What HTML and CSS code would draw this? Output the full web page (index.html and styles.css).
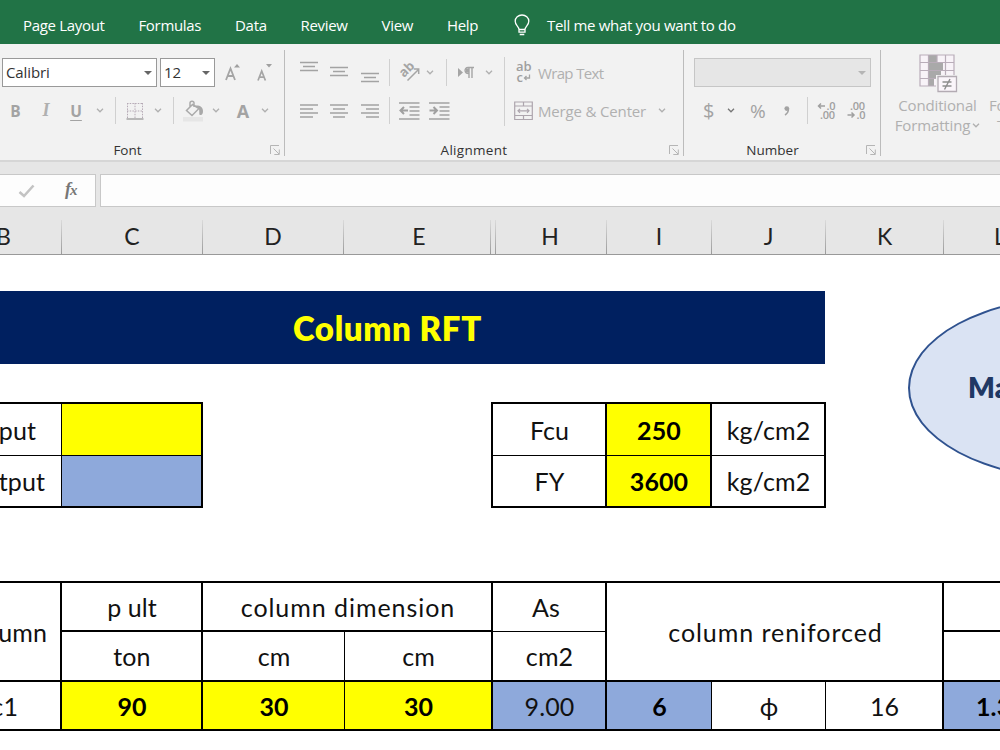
FILE: index.html
```
<!DOCTYPE html>
<html lang="en">
<head>
<meta charset="utf-8">
<title>Column RFT</title>
<link rel="stylesheet" href="styles.css">
</head>
<body>
<svg class="defs" width="0" height="0">
  <symbol id="chev" viewBox="0 0 8 5"><path d="M1 .8 4 3.8 7 .8" fill="none" stroke="currentColor" stroke-width="1.3"/></symbol>
  <symbol id="tri" viewBox="0 0 8 4"><path d="M0 0h8L4 4z" fill="currentColor"/></symbol>
  <symbol id="launch" viewBox="0 0 10 10"><path d="M.5 9V.5H9M3.5 3.5 9 9M9.3 4.5v5h-5" fill="none" stroke="#b5b5b5"/></symbol>
</svg>

<nav class="tabs">
  <span>Page Layout</span><span>Formulas</span><span>Data</span><span>Review</span><span>View</span><span>Help</span>
  <span class="tell">
    <svg class="bulb" width="16" height="22" viewBox="0 0 16 22"><path d="M5 15.5c0-3-3.8-4-3.8-8.2a6.8 6.3 0 0 1 13.6 0c0 4.200-3.800 5.200-3.800 8.200zM5 15.500v2.700h6v-2.700M5.700 20.500h4.600" fill="none" stroke="#fff" stroke-width="1.300"/></svg>
    <span class="ask">Tell me what you want to do</span>
  </span>
</nav>

<section class="ribbon">
  <div class="group font">
    <div class="row1 fontrow1">
      <div class="combo"><span>Calibri</span><svg width="8" height="4"><use href="#tri"/></svg></div>
      <div class="combo"><span>12</span><svg width="8" height="4"><use href="#tri"/></svg></div>
      <svg class="grow" width="18" height="20" viewBox="0 0 18 20"><path d="M2 17 6.500 5.500 11 17M3.600 13h6" fill="none" stroke="#a5a5a5" stroke-width="1.800"/><path d="M10 4.500h6L13 1z" fill="#a0a0a0"/></svg>
      <svg class="shrink" width="18" height="20" viewBox="0 0 18 20"><path d="M2 17.500 5.700 8 9.400 17.500M3.400 14.200h4.800" fill="none" stroke="#a5a5a5" stroke-width="1.700"/><path d="M10 1h6l-3 3.500z" fill="#a0a0a0"/></svg>
    </div>
    <div class="row2 fontrow2">
      <b>B</b><i>I</i><u>U</u>
      <svg width="8" height="5"><use href="#chev"/></svg>
      <span class="sep"></span>
      <svg width="18" height="18" viewBox="0 0 18 18"><path d="M1 1.500h16M1 9h16M1.500 1v15M9 1v15M16.500 1v15" fill="none" stroke="#b5a9b5" stroke-dasharray="1.500 1.200"/><path d="M.5 17h17" stroke="#a5a5a5" stroke-width="1.500"/></svg>
      <svg width="8" height="5"><use href="#chev"/></svg>
      <span class="sep"></span>
      <svg class="bucket" width="22" height="22" viewBox="0 0 22 22"><path d="M0 17h20v4.500H0z" fill="#e6e6e6"/><path d="M9.500 4.500 3.500 10.500l5.500 5 7-7zM7 6.500V3c0-2.500 4-2.500 4 0v4" fill="none" stroke="#aaa" stroke-width="1.500"/><path d="M12 5.500c5-.5 8 1.500 8 5.500 0 2-.5 4-2.500 4-1.800 0-.8-2-1.500-6z" fill="#a9a9a9"/></svg>
      <svg width="8" height="5"><use href="#chev"/></svg>
      <b class="fontcolor">A</b>
      <svg width="8" height="5"><use href="#chev"/></svg>
    </div>
    <div class="caption"><span>Font</span></div>
    <svg class="launcher" width="10" height="10"><use href="#launch"/></svg>
  </div>

  <div class="group align">
    <div class="row1 alignrow1">
      <svg width="18" height="22" viewBox="0 0 18 22"><path d="M0 .5h18M3 4.500h12M0 8.500h18" stroke="#a3a3a3" stroke-width="1.300"/></svg>
      <svg width="18" height="22" viewBox="0 0 18 22"><path d="M0 5.500h18M3 9.500h12M0 13.500h18" stroke="#a3a3a3" stroke-width="1.300"/></svg>
      <svg width="18" height="22" viewBox="0 0 18 22"><path d="M0 11.500h18M3 15.500h12M0 19.500h18" stroke="#a3a3a3" stroke-width="1.300"/></svg>
      <span class="sep"></span>
      <svg class="orient" width="22" height="22" viewBox="0 0 22 22"><text class="ab" transform="translate(5 16) rotate(-45)">ab</text><path d="M8.500 18.500 19 8M14.800 7h4.900v4.900" fill="none" stroke="#a5a5a5" stroke-width="1.500"/></svg>
      <svg class="c1v" width="8" height="5"><use href="#chev"/></svg>
      <span class="sep"></span>
      <svg class="rtl" width="18" height="14" viewBox="0 0 18 14"><path d="M1 2v9l5-4.500z" fill="#a5a5a5"/><path d="M11.500 7.500C7 7.500 7 1.500 11 1.500h6M12 1.500V12M15 1.500V12" fill="none" stroke="#a5a5a5" stroke-width="1.400"/><path d="M9 2.500h3v4H9z" fill="#a5a5a5"/></svg>
      <svg class="c2v" width="8" height="5"><use href="#chev"/></svg>
    </div>
    <div class="wrap">
      <svg width="16" height="22" viewBox="0 0 16 22"><text class="abc" x="0" y="9">ab</text><text class="abc" x="0.500" y="19.500">c</text><path d="M13.500 12.500v3.500H8.500M10.500 14 8.500 16l2 2" fill="none" stroke="#a5a5a5" stroke-width="1.300"/></svg>
      <span>Wrap Text</span>
    </div>
    <div class="row2 alignrow2">
      <svg width="18" height="14" viewBox="0 0 18 14"><path d="M0 1h18M0 5h13M0 9h18M0 13h13" stroke="#a3a3a3" stroke-width="1.300"/></svg>
      <svg width="18" height="14" viewBox="0 0 18 14"><path d="M0 1h18M3 5h12M0 9h18M3 13h12" stroke="#a3a3a3" stroke-width="1.300"/></svg>
      <svg width="18" height="14" viewBox="0 0 18 14"><path d="M0 1h18M5 5h13M0 9h18M5 13h13" stroke="#a3a3a3" stroke-width="1.300"/></svg>
      <span class="sep"></span>
      <svg width="21" height="18" viewBox="0 0 21 18"><path d="M0 1h20.500M10.500 5h10M10.500 9h10M10.500 13h10M0 17h20.500" stroke="#a3a3a3" stroke-width="1.300"/><path d="M9 8.500H1.500M5 5 1.500 8.500 5 12" fill="none" stroke="#a0a0a0" stroke-width="2"/></svg>
      <svg width="21" height="18" viewBox="0 0 21 18"><path d="M0 1h20.500M10.500 5h10M10.500 9h10M10.500 13h10M0 17h20.500" stroke="#a3a3a3" stroke-width="1.300"/><path d="M.5 8.500H8M4.500 5 8 8.500 4.500 12" fill="none" stroke="#a0a0a0" stroke-width="2"/></svg>
    </div>
    <div class="merge">
      <svg width="19" height="20" viewBox="0 0 19 20"><path d="M.7 1h17.600v17.500H.7zM.7 5h17.600M.7 14.500h17.600M9.500 1v4M9.500 14.500v4M4 9.800h11M6 7.800l-2 2 2 2M13 7.800l2 2-2 2" fill="none" stroke="#ada5ad" stroke-width="1.200"/></svg>
      <span>Merge &amp; Center</span>
      <svg width="8" height="5"><use href="#chev"/></svg>
    </div>
    <div class="caption"><span>Alignment</span></div>
    <svg class="launcher" width="10" height="10"><use href="#launch"/></svg>
  </div>

  <div class="group number">
    <div class="row1"><div class="combo off"><svg width="8" height="4"><use href="#tri"/></svg></div></div>
    <div class="row2 numrow">
      <span class="sym">$</span>
      <svg class="dark" width="8" height="5"><use href="#chev"/></svg>
      <span class="sym pct">%</span>
      <svg width="6" height="10" viewBox="0 0 6 10"><circle cx="2.800" cy="2.600" r="2.400" fill="#a3a3a3"/><path d="M4.500 2.500C4.500 5.500 3.500 7.500 1 9" fill="none" stroke="#a3a3a3" stroke-width="1.500"/></svg>
      <span class="sep"></span>
      <svg width="20" height="20" viewBox="0 0 20 20"><text class="dec" x="9.500" y="9">.0</text><text class="dec" x="3" y="18">.00</text><path d="M8 5H1.500M4 2.500 1.500 5 4 7.500" fill="none" stroke="#a0a0a0" stroke-width="1.500"/></svg>
      <svg width="20" height="20" viewBox="0 0 20 20"><text class="dec" x="3" y="9">.00</text><text class="dec" x="9.500" y="18">.0</text><path d="M.5 14H7M4.500 11.500 7 14l-2.500 2.500" fill="none" stroke="#a0a0a0" stroke-width="1.500"/></svg>
    </div>
    <div class="caption"><span>Number</span></div>
    <svg class="launcher" width="10" height="10"><use href="#launch"/></svg>
  </div>

  <div class="styles">
    <div class="big cond">
      <svg width="39" height="39" viewBox="0 0 39 39"><path d="M1 1h34v31H1z" fill="#f8f3f8"/><path d="M10 1h8v7h-8zM10 9h14v7H10zM10 17h12v7H10zM10 25h5v7h-5z" fill="#a9a9a9"/><path d="M1 1h34v31H1zM1 8.500h34M1 16.500h34M1 24.500h34M9.500 1v31M18 1v7.500M26.500 1v31" fill="none" stroke="#b9adb9" stroke-width="1.200"/><path d="M17 21h22v18H17z" fill="#f2f2f2"/><path d="M19 22.500h18.500v15H19z" fill="#faf5fa" stroke="#b3abb3" stroke-width="1.300"/><path d="M23.500 28h9M23.500 32h9M31 25l-5.500 10.500" stroke="#8d8d8d" stroke-width="1.400"/></svg>
      <span>Conditional</span>
      <span class="line2">Formatting<svg width="8" height="5"><use href="#chev"/></svg></span>
    </div>
    <div class="big fmt"><span>Fo</span><span class="line2">T</span></div>
  </div>
</section>

<section class="formula">
  <div class="fx">
    <svg width="17" height="14" viewBox="0 0 17 14"><path d="M1.500 8 6 12 15.500 1.500" fill="none" stroke="#c3c3c3" stroke-width="2.600"/></svg>
    <span class="fn">f<small>x</small></span>
  </div>
  <div class="input"></div>
</section>

<section class="heads">
  <span class="hb">B</span><span>C</span><span>D</span><span class="he">E</span><span></span><span class="hh">H</span><span>I</span><span>J</span><span>K</span><span class="hl">L</span>
</section>

<main class="sheet">
  <div class="banner"><span>Column RFT</span></div>
  <div class="keys">
    <div class="legend">
      <div class="lab">Input</div><div class="yellow"></div>
      <div class="lab">Output</div><div class="blue"></div>
    </div>
    <div class="mats">
      <div>Fcu</div><div class="yellow bold">250</div><div>kg/cm2</div>
      <div>FY</div><div class="yellow bold">3600</div><div>kg/cm2</div>
    </div>
  </div>
  <div class="cols">
    <div class="first tall">column</div><div>p ult</div><div class="two wide">column dimension</div><div class="thinb as">As</div><div class="three tall wide">column reniforced</div><div class="edge"></div>
    <div>ton</div><div class="thinr">cm</div><div>cm</div><div class="cm2">cm2</div><div class="edge"></div>
    <div class="first c1">c1</div><div class="yellow bold">90</div><div class="yellow bold thinr">30</div><div class="yellow bold">30</div><div class="blue">9.00</div><div class="blue bold thinr">6</div><div class="thinr phi">ϕ</div><div>16</div><div class="blue bold ratio edge">1.3</div>
  </div>
  <div class="oval">Ma</div>
</main>
</body>
</html>
```
FILE: styles.css
```
* { box-sizing: border-box; }
body { margin: 0; width: 1000px; height: 750px; overflow: hidden; background: #fff; font-family: "Open Sans", "Noto Sans", sans-serif; display: flex; flex-direction: column; }
svg { display: block; flex: none; overflow: visible; }
.defs { position: absolute; }

.tabs { height: 44px; flex: none; background: #217346; color: #fff; display: flex; gap: 33.900px; padding: 5px 0 0 23px; align-items: center; font-size: 15px; letter-spacing: -.32px; white-space: nowrap; }
.tell { display: flex; align-items: center; gap: 17px; margin-left: 2px; }
.bulb { margin-top: 1px; }

.ribbon { height: 118px; flex: none; background: #f2f2f2; border-bottom: 2px solid #d6d6d6; display: flex; overflow: hidden; color: #b0b0b0; }
.group { position: relative; flex: none; display: grid; grid-template-rows: 13px 31px 7px 31px 13px 22px; }
.group::after { content: ""; position: absolute; right: 0; top: 6px; width: 1px; height: 106px; background: #bcbcbc; }
.font { width: 285px; }
.align { width: 399px; grid-template-columns: 219px 180px; }
.number { width: 197px; }
.row1 { grid-row: 2; display: grid; align-items: center; }
.row2 { grid-row: 4; display: grid; align-items: center; justify-items: center; }
.caption { grid-row: 6; grid-column: 1 / -1; text-align: center; color: #333; font-size: 13.500px; line-height: 23px; font-weight: 500; }
.font .caption { padding-right: 30px; }
.align .caption { padding-right: 21px; letter-spacing: .3px; }
.number .caption { padding-right: 20px; }
.launcher { position: absolute; right: 5px; bottom: 5px; }
.sep { width: 1px; height: 27px; background: #d0d0d0; }
.dark { color: #777; }

.fontrow1 { grid-template-columns: 155px 55px 18px 18px; padding-left: 2px; column-gap: 3px; }
.grow { margin-left: 6px; }
.shrink { margin-left: 17px; }
.combo { height: 29px; border: 1px solid #999; background: #fff; color: #333; display: flex; align-items: center; justify-content: space-between; padding: 0 4px 0 3px; font-size: 15px; letter-spacing: -.1px; line-height: 26px; }
.combo span { margin-top: -1px; }
.combo svg { color: #666; }
.combo.off { width: 177px; margin-left: 10px; background: #e6e6e6; border-color: #c6c6c6; justify-content: flex-end; }
.combo.off svg { color: #b5b5b5; }
.fontrow2 { grid-template-columns: 31px 30px 30px 18px 13px 25px 22px 9px 31px 14px 40px 4px; font-size: 15.500px; }
.fontrow2 b, .fontrow2 u { color: #a3a3a3; font-weight: 700; }
.fontrow2 i { font: italic 700 18px "Liberation Serif", serif; }
.fontrow2 u { text-underline-offset: 3px; text-decoration-thickness: 1px; }
.fontrow2 .fontcolor { font-size: 18px; font-weight: 700; }

.alignrow1, .alignrow2 { display: flex; align-items: center; padding-left: 15px; gap: 12.400px; }
.alignrow1 .sep, .alignrow2 .sep { margin-left: -2px; }
.alignrow1 .orient { margin-left: -4px; }
.alignrow1 .c1v { margin-left: -7.400px; }
.alignrow1 .c1v + .sep { margin-left: 0; }
.alignrow1 .rtl { margin-left: -2px; }
.alignrow1 .c2v { margin-left: -2.400px; }
.alignrow2 .sep + svg { margin-left: -3.400px; }
.alignrow2 svg:nth-child(6) { margin-left: -3.400px; }
.wrap, .merge { position: relative; display: flex; align-items: center; font-size: 15px; white-space: nowrap; line-height: 20px; }
.wrap { grid-row: 2; grid-column: 2; padding-left: 12px; gap: 6px; }
.wrap span { letter-spacing: -.65px; margin-top: 0; }
.merge { grid-row: 4; grid-column: 2; padding-left: 10px; gap: 5px; }
.merge span { letter-spacing: -.16px; margin-top: 1px; }
.merge span + svg { margin-left: 7px; }
.wrap::before { content: ""; position: absolute; left: 0; top: 0; width: 1px; height: 69px; background: #d0d0d0; }
.ab { font: 700 13px "Open Sans", sans-serif; fill: #a5a5a5; }
.abc { font: 600 13px "Open Sans", sans-serif; fill: #9f9f9f; }
.numrow { display: flex; padding-left: 19px; }
.numrow .dark { margin-left: 13px; }
.numrow .pct { margin-left: 15px; }
.numrow .pct + svg { margin-left: 17px; }
.numrow .sep { margin-left: 17px; }
.numrow .sep + svg { margin-left: 9px; }
.numrow svg:last-child { margin-left: 10px; }
.sym { font-size: 20px; width: 11px; color: #a3a3a3; }
.pct { width: 17px; font-size: 19px; }
.dec { font: 600 11px "Open Sans", sans-serif; fill: #a0a0a0; letter-spacing: -.3px; }

.styles { display: flex; flex: none; align-items: flex-start; width: 119px; overflow: hidden; }
.big { flex: none; display: flex; flex-direction: column; align-items: center; font-size: 15px; line-height: 20px; white-space: nowrap; letter-spacing: -.15px; }
.cond { width: 108px; padding: 10px 0 0 5px; }
.cond svg { margin: 0 0 2px 2px; }
.line2 { display: flex; align-items: center; }
.cond .line2 svg { margin-bottom: 0; }
.fmt { padding-top: 51px; align-items: flex-start; }
.fmt .line2 { margin-left: 8px; }

.formula { height: 58px; flex: none; background: #e6e6e6; display: flex; gap: 4px; padding: 12px 0 13px; }
.fx { width: 96px; border: 1px solid #c8c8c8; border-left: 0; background: #fdfdfd; display: flex; align-items: center; padding-left: 18px; gap: 30px; }
.fn { font: italic 700 18px "Liberation Serif", serif; color: #777; margin-top: -2px; }
.fn small { font-size: 15px; margin-left: -1px; }
.input { flex: 1; border: 1px solid #c8c8c8; border-right: 0; background: #fdfdfd; }

.heads { height: 35px; flex: none; background: #e6e6e6; border-bottom: 1px solid #999; display: grid; grid-template-columns: 62px 141px 141px 147px 5px 111px 105px 114px 118px 56px; font: 23px/33px Lato, "Open Sans", sans-serif; color: #222; text-align: center; overflow: hidden; }
.heads span { border-right: 1px solid; border-image: linear-gradient(#dcdcdc, #999) 1; }
.heads .hb { padding-right: 53px; text-indent: -4px; }
.heads .he { padding-left: 4px; }
.heads .hh { padding-right: 2px; }
.heads .hl { text-align: left; padding-left: 50px; border: 0; overflow: hidden; }

.sheet { position: relative; flex: 1; overflow: hidden; font: 25px Lato, "Open Sans", sans-serif; color: #111; white-space: nowrap; letter-spacing: .1px; }
.banner { margin-top: 35.500px; width: 825px; height: 73.500px; background: #002060; color: #ff0; font-size: 33px; font-weight: 800; letter-spacing: .6px; display: flex; align-items: center; padding: 1px 0 0 293px; }
.yellow { background: #ff0; }
.blue { background: #8ea9db; }
.bold { font-weight: 700; color: #000; }
.keys { display: flex; margin-top: 38px; gap: 288px; }
.legend, .mats { display: grid; grid-template-rows: 52px 50px; border-top: 2px solid #000; border-bottom: 2px solid #000; }
.legend { grid-template-columns: 62px 139px; border-right: 2px solid #000; width: 203px; }
.legend > :nth-child(-n+2), .mats > :nth-child(-n+3) { border-bottom: 1px solid #000; }
.lab { border-right: 1px solid #000; display: flex; align-items: center; justify-content: flex-end; padding: 0 25px 0 0; }
.legend .lab:nth-child(3) { padding-right: 16px; }
.mats { width: 335px; grid-template-columns: 114px 105px 114px; border-left: 2px solid #000; }
.mats div, .cols div { display: flex; align-items: center; justify-content: center; border-right: 2px solid #000; }
.mats div { padding-left: 1px; }
.cols { margin-top: 73px; width: 1000px; display: grid; grid-template-columns: 62px 141px 142px 148px 114px 105px 114px 118px 56px; grid-template-rows: 49px 50px 49px; border-top: 2px solid #000; }
.cols > div { border-bottom: 2px solid #000; padding-left: 1px; }
.cols .thinr { border-right-width: 1px; }
.cols .thinb { border-bottom-width: 1px; }
.cols .tall { grid-row: span 2; }
.cols .two { grid-column: span 2; }
.cols .three { grid-column: span 3; }
.cols .wide { letter-spacing: .95px; padding-left: 2px; }
.cols .first { justify-content: flex-end; padding-right: 13px; }
.cols .c1 { padding-right: 42px; }
.cols .edge { border-right: 0; overflow: hidden; }
.cols .ratio { justify-content: flex-start; padding-left: 32px; }
.cols .as { padding-right: 7px; }
.oval { position: absolute; left: 908px; top: 41px; width: 341px; height: 184px; border: 2px solid #2f528f; border-radius: 50%; background: #dae3f3; color: #203864; font-size: 28px; font-weight: 800; line-height: 178px; padding-left: 58px; }
```
